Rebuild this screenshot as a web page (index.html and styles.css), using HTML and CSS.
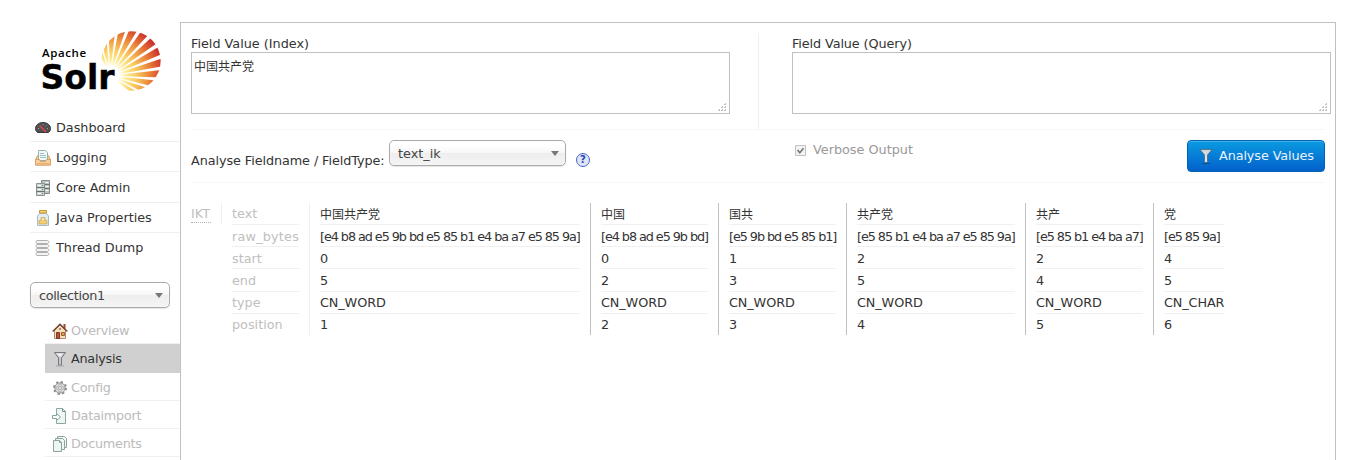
FILE: index.html
```html
<!DOCTYPE html>
<html lang="en">
<head>
<meta charset="utf-8">
<title>Solr Admin</title>
<link rel="stylesheet" href="styles.css">
</head>
<body>
<div class="page">
  <aside class="sidebar">
    <a class="logo">
      <svg class="sun" viewBox="0 0 180 180">
        <defs>
          <radialGradient id="ray" gradientUnits="userSpaceOnUse" cx="27" cy="134" r="168">
            <stop offset=".16" stop-color="#fff"/><stop offset=".28" stop-color="#ffeb98"/><stop offset=".44" stop-color="#fbd066"/><stop offset=".66" stop-color="#ee9440"/><stop offset=".84" stop-color="#dc5a30"/><stop offset="1" stop-color="#c9252b"/>
          </radialGradient>
          <clipPath id="disc"><circle cx="90" cy="90" r="89"/></clipPath>
        </defs>
        <g clip-path="url(#disc)">
          <circle cx="27" cy="134" r="100" pathLength="360" fill="none" stroke="url(#ray)" stroke-width="200" stroke-dasharray="8.200 4 8.200 4 8.200 4 8.200 4 8.200 4 8.200 4 8.200 4 8.200 4 8.200 4 8.200 4 8.200 4 8.200 4 8.200 205.400" transform="rotate(-116 27 134)"/>
        </g>
      </svg>
      <span class="apache">Apache</span>
      <span class="solr">Solr</span>
    </a>
    <ul class="menu">
      <li><svg class="ic" viewBox="0 0 16 16"><path d="M.5 8.500C.5 5 4 2.500 8 2.500s7.500 2.500 7.500 6c0 2-1 3.500-2.500 4H3C1.500 12 .5 10.500.5 8.500z" fill="#505155" stroke="#38393c"/><path d="M3 8.500l1 .1M8 4v1M11.500 5.500l-.7.6M13 8.500l-1 .1" stroke="#a4a7ab"/><path d="M4.500 5.500l6.500 6.500" stroke="#f04545" stroke-width="1.200"/></svg><span>Dashboard</span></li>
      <li><svg class="ic" viewBox="0 0 16 16"><path d="M2.500 5.500l-2 4.500v5h15v-5l-2-4.500z" fill="#f6c98f" stroke="#d6a26c"/><path d="M3.500.5h7l2 2v8h-9v-9z" fill="#f1f8f6" stroke="#93b1af"/><path d="M5 3.500h4M5 5.500h6M5 7.500h6" stroke="#9fc2c0"/><path d="M.5 9.500h4l1 2h5l1-2h4v5.500H.5z" fill="#f8cf9c" stroke="#d9a06a"/><path d="M2 13.500h12" stroke="#eeb06c"/></svg><span>Logging</span></li>
      <li><svg class="ic" viewBox="0 0 16 16"><path d="M6.500.5h8v13h-8z" fill="#bac1c0" stroke="#858d8c"/><path d="M6.500 4.500h8m-8 4h8" stroke="#6f7877"/><path d="M1.500 3.500h8v12h-8z" fill="#c9d0cf" stroke="#8b9493"/><path d="M1.500 7.500h8m-8 4h8" stroke="#687370"/><path d="M3 5.500h3m-3 4h3m-3 4h3M10.500 2.500h3m-3 4h3m-3 4h3" stroke="#fff"/><path d="M7 5.500h1m-1 4h1m-1 4h1" stroke="#4b9a67"/></svg><span>Core Admin</span></li>
      <li><svg class="ic" viewBox="0 0 16 16"><path d="M4.500 3.500h7l2 2.500v9.500h-11V6z" fill="#e2edf6" stroke="#a4bccd"/><path d="M4.500.5h7v2.500h-7z" fill="#f7cf68" stroke="#c99b3b"/><path d="M6 7.500h4v3h2v3.500H4v-3.500h2z" fill="#f2d077" stroke="#c9a14c" stroke-width=".7"/><circle cx="8" cy="9" r="1" fill="#fff4be"/></svg><span>Java Properties</span></li>
      <li><svg class="ic" viewBox="0 0 16 16"><g fill="#f4f4f4" stroke="#b0b0b0"><path d="M2 .5h10.500c2 1 2 2 0 3H2C.5 2.500.5 1.500 2 .5z"/><path d="M2 4.500h10.500c2 1 2 2 0 3H2c-1.500-1-1.500-2 0-3z"/><path d="M2 8.500h10.500c2 1 2 2 0 3H2c-1.500-1-1.500-2 0-3z"/><path d="M2 12.500h10.500c2 1 2 2 0 3H2c-1.500-1-1.500-2 0-3z"/></g></svg><span>Thread Dump</span></li>
    </ul>
    <div class="select core"><span>collection1</span><i></i></div>
    <ul class="submenu">
      <li><svg class="ic" viewBox="0 0 16 16"><path d="M11.500 1h2v5h-2z" fill="#9c4b35"/><path d="M2.500 7.500L8 2l5.500 5.500v8h-11z" fill="#f8dfbc" stroke="#b88b6c"/><path d="M.7 8.500L8 1.200l7.300 7.300" fill="none" stroke="#6e443a" stroke-width="1.400"/><path d="M4.500 9.500h3v6h-3z" fill="#b55334" stroke="#7c3827"/><path d="M9.500 9.500h3v3h-3z" fill="#e9a23d" stroke="#9c6039"/><circle cx="8" cy="6" r="1" fill="#9b6a4b"/></svg><span>Overview</span></li>
      <li class="active"><svg class="ic" viewBox="0 0 16 16"><path d="M2.500 1.500h11L9.500 7v7h-3V7z" fill="#c7c8ce" stroke="#77787d"/><path d="M4 2.500h7L8.500 6z" fill="#f0f0f3"/><path d="M4 15h8" stroke="#a3a3a6"/></svg><span>Analysis</span></li>
      <li><svg class="ic" viewBox="0 0 16 16"><circle cx="8" cy="8" r="6" fill="none" stroke="#8c8c8c" stroke-width="2" stroke-dasharray="2.200 2.512"/><circle cx="8" cy="8" r="5.200" fill="#dedede" stroke="#8e8e8e" stroke-width=".9"/><g fill="#fff" stroke="#878787" stroke-width=".7"><circle cx="8" cy="5.200" r="1.300"/><circle cx="8" cy="10.800" r="1.300"/><circle cx="5.200" cy="8" r="1.300"/><circle cx="10.800" cy="8" r="1.300"/></g></svg><span>Config</span></li>
      <li><svg class="ic" viewBox="0 0 16 16"><path d="M4.500.5h6l3 3v12h-9z" fill="#eef6f4" stroke="#8da7a4"/><path d="M10.500.5v3h3" fill="none" stroke="#779692"/><path d="M.5 7.500h4v-2l4 3.500-4 3.500v-2h-4z" fill="#fff" stroke="#7fa29b"/></svg><span>Dataimport</span></li>
      <li><svg class="ic" viewBox="0 0 16 16"><g fill="#eef6f4" stroke="#8ca3a0"><path d="M5.500.5h7l2 2v9h-9z"/><path d="M3.500 2.500h7l2 2v9h-9z"/><path d="M1.500 4.500h6l2 2v9h-8z"/><path d="M7.500 4.500v2h2" fill="none"/></g></svg><span>Documents</span></li>
    </ul>
  </aside>

  <main class="content">
    <div class="fields">
      <div class="field index">
        <label for="fi">Field Value (Index)</label>
        <div class="area"><textarea id="fi">中国共产党</textarea><svg class="grip" viewBox="0 0 8 8"><path d="M7 0h1v2H7zM4 3h1v2H4zM7 3h1v2H7zM1 6h1v2H1zM4 6h1v2H4zM7 6h1v2H7zM6 1h1v1H6zM3 4h1v1H3zM6 4h1v1H6zM0 7h1v1H0zM3 7h1v1H3zM6 7h1v1H6z"/></svg></div>
      </div>
      <div class="field query">
        <label for="fq">Field Value (Query)</label>
        <div class="area"><textarea id="fq"></textarea><svg class="grip" viewBox="0 0 8 8"><path d="M7 0h1v2H7zM4 3h1v2H4zM7 3h1v2H7zM1 6h1v2H1zM4 6h1v2H4zM7 6h1v2H7zM6 1h1v1H6zM3 4h1v1H3zM6 4h1v1H6zM0 7h1v1H0zM3 7h1v1H3zM6 7h1v1H6z"/></svg></div>
      </div>
    </div>
    <div class="controls">
      <span class="caption">Analyse Fieldname / FieldType:</span>
      <div class="select type"><span>text_ik</span><i></i></div>
      <span class="help">?</span>
      <div class="verbose"><svg viewBox="0 0 11 11"><path d="M.5.5h10v10H.5z" fill="#f1f1f1" stroke="#b4b4b4"/><path d="M2.500 5l2.300 2.700L8.500 3.300" fill="none" stroke="#555" stroke-width="1.700"/></svg><span>Verbose Output</span></div>
      <button class="analyse"><svg class="ic" viewBox="0 0 16 16"><path d="M2 1.500h12L9.500 7v7.500h-3V7z" fill="#d4d6db" stroke="#3e6175" stroke-width=".7"/><path d="M8 7v7" stroke="#f1f1f1"/><path d="M4 15.500h8" stroke="#075291"/></svg><span>Analyse Values</span></button>
    </div>
    <div class="result">
      <div class="analyzer"><abbr>IKT</abbr></div>
      <div class="col names"><div>text</div><div class="wide">raw_bytes</div><div>start</div><div>end</div><div>type</div><div>position</div></div>
      <div class="col first"><div class="han">中国共产党</div><div class="raw">[e4 b8 ad e5 9b bd e5 85 b1 e4 ba a7 e5 85 9a]</div><div>0</div><div>5</div><div>CN_WORD</div><div>1</div></div>
      <div class="col"><div class="han">中国</div><div class="raw">[e4 b8 ad e5 9b bd]</div><div>0</div><div>2</div><div>CN_WORD</div><div>2</div></div>
      <div class="col"><div class="han">国共</div><div class="raw">[e5 9b bd e5 85 b1]</div><div>1</div><div>3</div><div>CN_WORD</div><div>3</div></div>
      <div class="col"><div class="han">共产党</div><div class="raw">[e5 85 b1 e4 ba a7 e5 85 9a]</div><div>2</div><div>5</div><div>CN_WORD</div><div>4</div></div>
      <div class="col"><div class="han">共产</div><div class="raw">[e5 85 b1 e4 ba a7]</div><div>2</div><div>4</div><div>CN_WORD</div><div>5</div></div>
      <div class="col"><div class="han">党</div><div class="raw">[e5 85 9a]</div><div>4</div><div>5</div><div>CN_CHAR</div><div>6</div></div>
    </div>
  </main>
</div>
</body>
</html>
```
FILE: styles.css
```css
* { box-sizing: border-box; }
body {
  margin: 0;
  height: 460px;
  overflow: hidden;
  background: #fff;
  color: #333;
  font: 12.8px/16px "DejaVu Sans", "Noto Sans CJK SC", sans-serif;
}
ul { margin: 0; padding: 0; list-style: none; }
.page { display: flex; padding: 22px 15px 0 30px; height: 460px; }
.sidebar { width: 150px; flex: none; }
.ic { width: 16px; height: 16px; flex: none; display: block; }

.logo { display: block; position: relative; height: 90px; color: #000; }
.sun { position: absolute; left: 71px; top: 9px; width: 60px; height: 60px; }
.apache { position: absolute; left: 12px; top: 23px; font: 600 11.5px/16px "Open Sans", sans-serif; letter-spacing: .6px; }
.solr { position: absolute; left: 10.500px; top: 42px; font: bold 33px/28px "DejaVu Sans", sans-serif; -webkit-text-stroke: .4px #000; }

.menu li { display: flex; align-items: center; gap: 5px; height: 30px; padding: 1px 0 0 5px; border-bottom: 1px solid #f0f0f0; }
.menu li:nth-child(3) { height: 31px; }
.menu li:nth-child(-n+3) { padding-top: 2px; }
.menu li:last-child { border: 0; padding-top: 0; }

.select {
  display: flex; align-items: center; justify-content: space-between;
  height: 26px; padding: 0 6px 0 8px;
  border: 1px solid #aaa; border-radius: 5px;
  background: linear-gradient(#fff 20%, #f6f6f6 50%, #eee 52%, #f4f4f4 100%);
  box-shadow: inset 0 0 2px #fff, 0 1px 1px rgba(0,0,0,.1);
  color: #444;
}
.select span { padding-top: 2px; }
.select i { border: 4.500px solid transparent; border-top: 5px solid #777; border-bottom: 0; }
.core { width: 140px; margin-top: 19px; }
.core span { letter-spacing: -.35px; }

.submenu { margin: 8px 0 0 15px; color: #bbb; letter-spacing: -.25px; }
.submenu li { display: flex; align-items: center; gap: 3px; height: 28.300px; padding: 2px 0 0 7px; border-bottom: 1px solid #f0f0f0; }
.submenu li:nth-child(3) { padding-top: 3px; }
.submenu .active { background: #d0d0d0; border-color: #d0d0d0; color: #333; }

.content { width: 1156px; flex: none; border: 1px solid #c0c0c0; border-bottom: 0; padding: 10px 4px 0 10px; }
.fields { display: flex; height: 97px; width: 1140px; background: linear-gradient(#f8f8f8, #f8f8f8) 0 100% / 1134px 1px no-repeat; }
.field { padding-top: 3px; }
.index { width: 568px; height: 96px; border-right: 1px solid #f0f0f0; }
.query { padding-left: 33px; }
.field label { display: block; height: 16px; }
.query label { letter-spacing: -.1px; }
.area { position: relative; width: 539px; height: 62px; }
textarea {
  display: block; width: 539px; height: 62px; margin: 0; padding: 5px 2px;
  border: 1px solid #c0c0c0; border-radius: 0; resize: none; outline: 0; overflow: hidden;
  background: #fff; color: #333; font: 12px/16px "Noto Sans CJK SC", sans-serif;
}
.grip { position: absolute; right: 4px; bottom: 3px; width: 8px; height: 8px; fill: #c0c0c0; }

.controls { display: flex; align-items: flex-start; width: 1134px; height: 53px; padding-top: 10px; border-bottom: 1px solid #f8f8f8; }
.caption { width: 198px; padding-top: 13px; white-space: nowrap; letter-spacing: -.08px; }
.type { width: 177px; }
.help {
  width: 14px; height: 14px; margin: 13px 0 0 10px;
  border: 1px solid #4465cf; border-radius: 50%; background: #dfe5f5;
  color: #2445b5; font: bold 10px/12px "DejaVu Sans", sans-serif; text-align: center;
}
.verbose { display: flex; align-items: center; gap: 7px; margin: 2px 0 0 205px; color: #999; }
.verbose svg { width: 11px; height: 11px; opacity: .8; }
.analyse {
  display: flex; align-items: center; gap: 5px; width: 138px; height: 32px; margin: 0 0 0 auto; padding: 0 0 0 10px;
  border: 1px solid #0862b4; border-radius: 4px;
  background: linear-gradient(#0a9be0, #0360cc);
  box-shadow: inset 0 1px 0 #3fb0e8;
  color: #e8f4fc; font: inherit; letter-spacing: -.1px; white-space: nowrap;
}

.result {
  display: grid; align-items: start; padding-top: 20px;
  grid-template-columns: 30px 88px 281px 128px 128px 179px 128px 71px;
}
.analyzer { height: 22px; color: #c0c0c0; padding-top: 3px; }
.analyzer abbr { display: inline-block; height: 17px; width: 20px; border-bottom: 1px dotted #b0b0b0; }
.col { height: 132px; padding: 0 10px; border-left: 1px solid #c0c0c0; white-space: nowrap; letter-spacing: -.1px; }
.col:last-child { padding-right: 0; }
.col > div { height: 22px; line-height: 22px; border-bottom: 1px solid #f0f0f0; }
.col > div:nth-child(n+2):nth-child(-n+4) { line-height: 24px; }
.col > div:nth-child(4) { height: 23px; }
.col > div:last-child { height: 21px; border: 0; }
.names { color: #c0c0c0; letter-spacing: 0; border-color: transparent; border-image: linear-gradient(#f0f0f0 22px, transparent 22px) 1; border-width: 0 0 0 1px; }
.names .wide { letter-spacing: .2px; }
.first { border-color: #f0f0f0; }
.col .han { font: 12px/22px "Noto Sans CJK SC", sans-serif; letter-spacing: 0; }
.col .raw { letter-spacing: -1.060px; }
```
